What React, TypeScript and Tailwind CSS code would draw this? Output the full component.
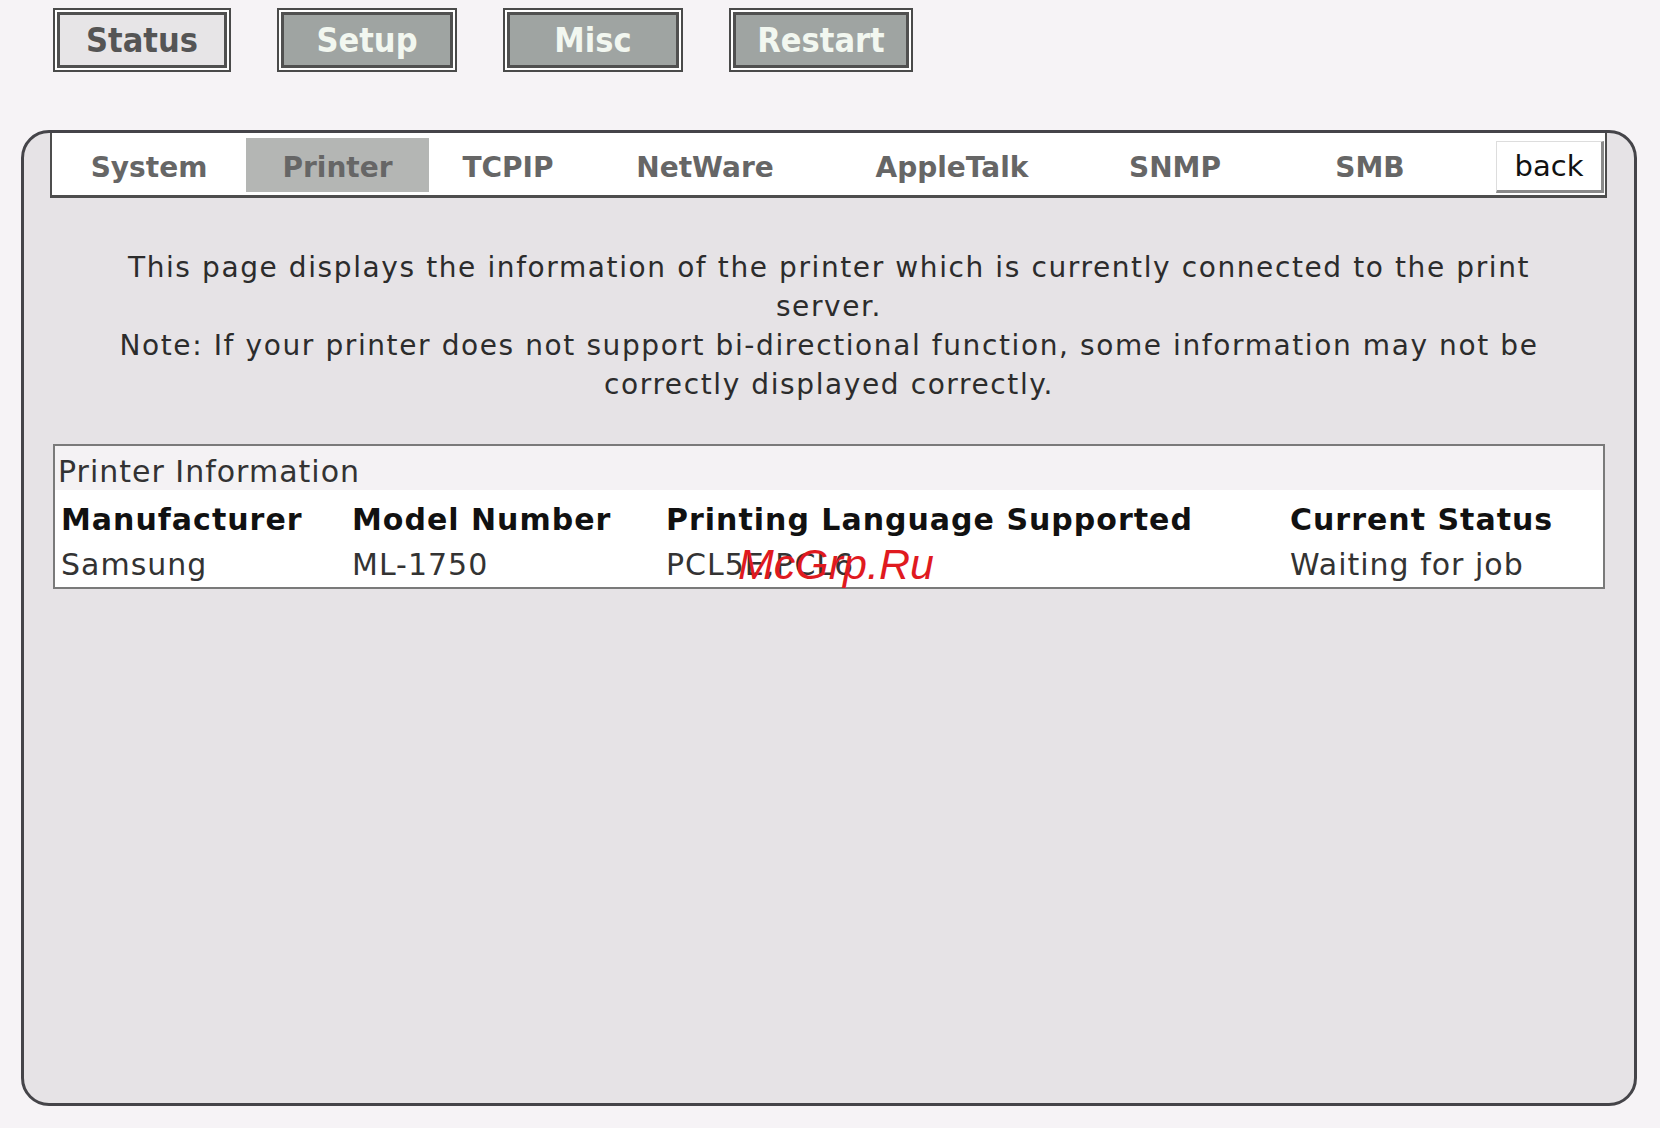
const topButtons = [
  { label: "Status", active: true, width: "w-[178px]" },
  { label: "Setup", active: false, width: "w-[180px]" },
  { label: "Misc", active: false, width: "w-[180px]" },
  { label: "Restart", active: false, width: "w-[184px]" },
];

const tabs = [
  { label: "System", width: "w-[194px]" },
  { label: "Printer", width: "w-[183px]", active: true },
  { label: "TCPIP", width: "w-[158px]" },
  { label: "NetWare", width: "w-[236px]" },
  { label: "AppleTalk", width: "w-[258px]" },
  { label: "SNMP", width: "w-[188px]" },
  { label: "SMB", width: "w-[202px]" },
];

const columns = [
  { head: "Manufacturer", value: "Samsung", width: "w-[291px]" },
  { head: "Model Number", value: "ML-1750", width: "w-[314px]" },
  { head: "Printing Language Supported", value: "PCL5E,PCL6", width: "w-[624px]" },
  { head: "Current Status", value: "Waiting for job", width: "flex-1" },
];

function TopButton({ label, active, width }: { label: string; active: boolean; width: string }) {
  return (
    <div className={`${width} h-[64px] border-2 border-[#4a4a4a] bg-white p-[2px]`}>
      <div
        className={`h-full flex items-center justify-center border-[3px] border-[#505050] text-[34px] font-bold font-['DejaVu_Sans_Condensed',sans-serif] leading-none ${
          active ? "bg-[#e7e5e7] text-[#555]" : "bg-[#9fa4a2] text-[#f2f7f0]"
        }`}
      >
        {label}
      </div>
    </div>
  );
}

export default function App() {
  return (
    <div className="w-[1660px] h-[1128px] bg-[#f6f3f6] font-['DejaVu_Sans',sans-serif] overflow-hidden">
      <div className="flex gap-[46px] pl-[53px] pt-[8px]">
        {topButtons.map((b) => (
          <TopButton key={b.label} {...b} />
        ))}
      </div>

      <div className="relative ml-[21px] mt-[58px] w-[1616px] h-[976px] border-[3px] border-[#454449] rounded-[28px] bg-[#e6e3e6]">
        {/* sub tabs */}
        <div className="ml-[26px] mr-[27px] h-[65px] bg-white border-x-2 border-b-[3px] border-[#4d4d4d] flex items-stretch pt-[5px] pb-[3px]">
          {tabs.map((t) => (
            <div
              key={t.label}
              className={`${t.width} flex items-center justify-center pt-[6px] text-[28px] font-bold text-[#666] ${
                t.active ? "bg-[#b4b6b4] text-[#6a6a6a]" : ""
              }`}
            >
              {t.label}
            </div>
          ))}
          <div className="ml-[25px] w-[108px] mt-[3px] mb-[-1px] flex items-center justify-center pt-[2px] bg-white border-l border-t border-[#ddd] border-r-[3px] border-b-[3px] border-r-[#8a8a8a] border-b-[#8a8a8a] text-[29px] text-[#111]">
            back
          </div>
        </div>

        {/* description */}
        <div className="mt-[50px] flex flex-col items-center text-[28px] tracking-[1.6px] leading-[39px] text-[#2c2c2c] whitespace-nowrap">
          <span>This page displays the information of the printer which is currently connected to the print</span>
          <span>server.</span>
          <span>Note: If your printer does not support bi-directional function, some information may not be</span>
          <span>correctly displayed correctly.</span>
        </div>

        {/* info table */}
        <div className="relative mt-[40px] ml-[29px] mr-[29px] border-2 border-[#7a7a7a] bg-white tracking-[1px]">
          <div className="h-[44px] bg-[#f4f2f4] flex items-center pl-[3px] pt-[6px] text-[30px] text-[#333]">
            Printer Information
          </div>
          <div className="flex pl-[6px] pt-[6px] pb-[1px]">
            {columns.map((c) => (
              <div key={c.head} className={`${c.width} flex flex-col`}>
                <span className="h-[46px] flex items-center text-[30px] font-bold text-[#111]">{c.head}</span>
                <span className="h-[44px] flex items-center text-[30px] text-[#333]">{c.value}</span>
              </div>
            ))}
          </div>
          <span className="absolute left-[683px] top-[97px] text-[43px] italic tracking-normal text-[#e01a1f] font-['Liberation_Sans',sans-serif] leading-none">
            McGrp.Ru
          </span>
        </div>
      </div>
    </div>
  );
}
